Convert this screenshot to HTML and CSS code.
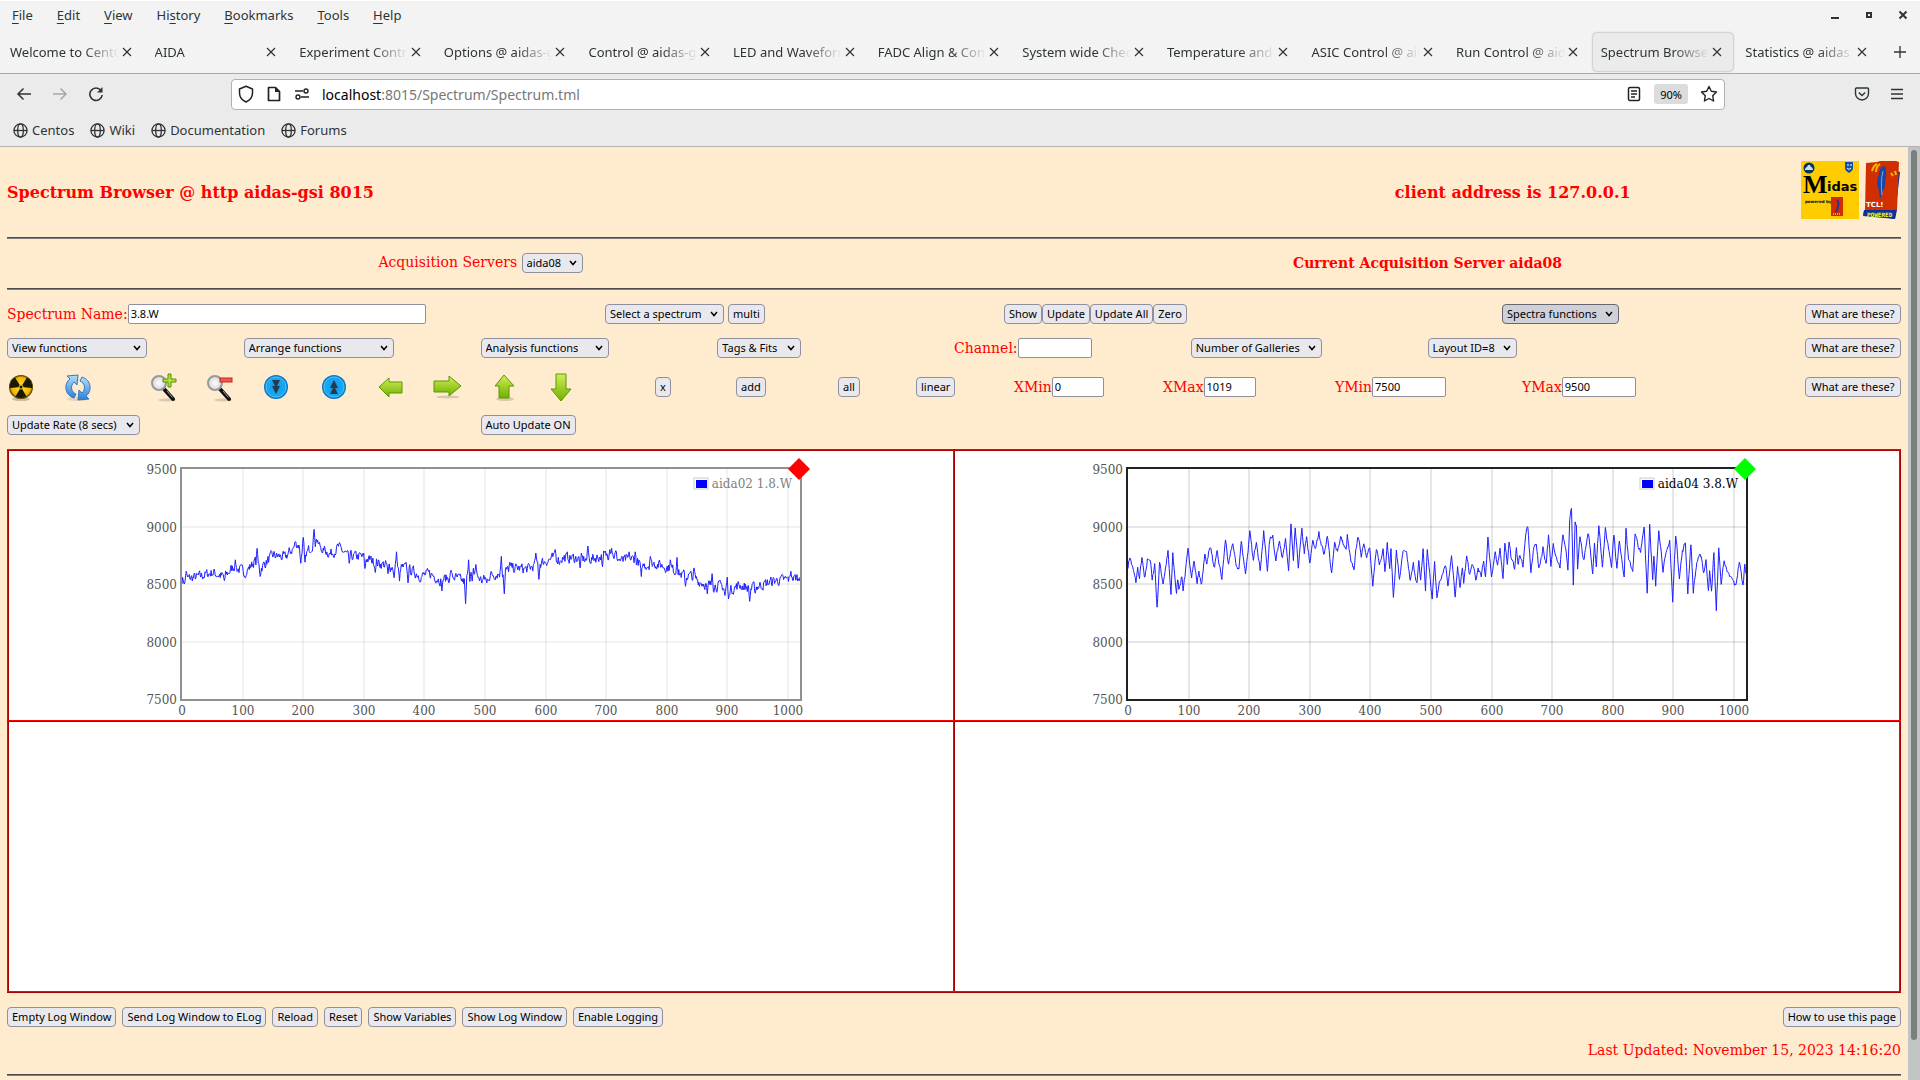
FILE: index.html
```
<!DOCTYPE html>
<html lang="en">
<head>
  <meta charset="UTF-8">
  <meta name="viewport" content="width=device-width, initial-scale=1.0">
  <title>Spectrum Browser @ http aidas-gsi 8015</title>
  <link rel="stylesheet" href="styles.css">
</head>
<body>
  <header class="browser">
    <div class="menubar">
      <nav class="menus">
        <a href="#"><u>F</u>ile</a>
        <a href="#"><u>E</u>dit</a>
        <a href="#"><u>V</u>iew</a>
        <a href="#">Hi<u>s</u>tory</a>
        <a href="#"><u>B</u>ookmarks</a>
        <a href="#"><u>T</u>ools</a>
        <a href="#"><u>H</u>elp</a>
      </nav>
      <div class="window-buttons">
        <button class="plain" aria-label="Minimize"><svg width="10" height="10"><path d="M1 8h8" stroke="#2e3436" stroke-width="2"/></svg></button>
        <button class="plain" aria-label="Maximize"><svg width="10" height="10"><path d="M3 3h4v4h-4z" fill="none" stroke="#2e3436" stroke-width="2"/></svg></button>
        <button class="plain" aria-label="Close"><svg width="10" height="10"><path d="M1.500 1.500l7 7M8.500 1.500l-7 7" stroke="#2e3436" stroke-width="2"/></svg></button>
      </div>
    </div>

    <div class="tabs">
      <div class="tab"><a href="#">Welcome to CentOS</a><button class="plain close" aria-label="Close tab"></button></div>
      <div class="tab"><a href="#">AIDA</a><button class="plain close" aria-label="Close tab"></button></div>
      <div class="tab"><a href="#">Experiment Control</a><button class="plain close" aria-label="Close tab"></button></div>
      <div class="tab"><a href="#">Options @ aidas-gsi</a><button class="plain close" aria-label="Close tab"></button></div>
      <div class="tab"><a href="#">Control @ aidas-gsi</a><button class="plain close" aria-label="Close tab"></button></div>
      <div class="tab"><a href="#">LED and Waveform</a><button class="plain close" aria-label="Close tab"></button></div>
      <div class="tab"><a href="#">FADC Align &amp; Control</a><button class="plain close" aria-label="Close tab"></button></div>
      <div class="tab"><a href="#">System wide Checks</a><button class="plain close" aria-label="Close tab"></button></div>
      <div class="tab"><a href="#">Temperature and</a><button class="plain close" aria-label="Close tab"></button></div>
      <div class="tab"><a href="#">ASIC Control @ aidas</a><button class="plain close" aria-label="Close tab"></button></div>
      <div class="tab"><a href="#">Run Control @ aidas</a><button class="plain close" aria-label="Close tab"></button></div>
      <div class="tab active"><a href="#">Spectrum Browser</a><button class="plain close" aria-label="Close tab"></button></div>
      <div class="tab"><a href="#">Statistics @ aidas</a><button class="plain close" aria-label="Close tab"></button></div>
      <button class="plain new-tab" aria-label="New tab"><svg width="14" height="14"><path d="M7 1v12M1 7h12" stroke="#2e3436" stroke-width="1.300"/></svg></button>
    </div>

    <div class="toolbar">
      <div class="nav-buttons">
        <button class="plain" aria-label="Back"><svg width="16" height="16" fill="none" stroke="#2e3436" stroke-width="1.500"><path d="M15 8H2M7.500 2.500L2 8l5.500 5.500"/></svg></button>
        <button class="plain" aria-label="Forward"><svg width="16" height="16" fill="none" stroke="#a6a8a8" stroke-width="1.500"><path d="M1 8h13M8.500 2.500L14 8l-5.500 5.500"/></svg></button>
        <button class="plain" aria-label="Reload"><svg width="16" height="16" fill="none" stroke="#2e3436" stroke-width="1.600"><path d="M13 4.500A6.200 6.200 0 1 0 14.200 9"/><path d="M14.500 1v5.500H9z" fill="#2e3436" stroke="none"/></svg></button>
      </div>
      <div class="urlbar">
        <svg width="16" height="18" fill="none" stroke="#222" stroke-width="1.500"><path d="M8 1.200L14.500 4v4c0 4-2.500 7-6.500 9-4-2-6.500-5-6.500-9V4z" stroke-linejoin="round"/></svg>
        <svg width="16" height="18" fill="none" stroke="#222" stroke-width="1.700"><path d="M2.500 2.500h7l4 4v9h-11z" stroke-linejoin="round"/><path d="M9 2v5h5z" fill="#222" stroke="none"/></svg>
        <svg width="16" height="18" fill="none" stroke="#222" stroke-width="1.400"><path d="M1 6h8M7 12h8"/><circle cx="12" cy="6" r="2"/><circle cx="4" cy="12" r="2"/></svg>
        <div class="address"><b>localhost</b>:8015/Spectrum/Spectrum.tml</div>
        <svg width="16" height="18" fill="none" stroke="#222" stroke-width="1.500"><rect x="2.500" y="2.500" width="11" height="13" rx="1.500"/><path d="M5 6h6M5 9h6M5 12h4"/></svg>
        <button class="plain zoom">90%</button>
        <svg width="18" height="18" fill="none" stroke="#222" stroke-width="1.400" stroke-linejoin="round"><path d="M9 1.500l2.300 4.800 5.200.7-3.800 3.700.9 5.300L9 13.500 4.400 16l.9-5.300L1.500 7l5.200-.7z"/></svg>
      </div>
      <div class="side-buttons">
        <button class="plain" aria-label="Pocket"><svg width="16" height="16" fill="none" stroke="#2e3436" stroke-width="1.400"><path d="M2.500 2h11a1 1 0 0 1 1 1v4.500a6.500 6.500 0 0 1-13 0V3a1 1 0 0 1 1-1z"/><path d="M4.800 6.500L8 9.500l3.200-3"/></svg></button>
        <button class="plain" aria-label="Menu"><svg width="14" height="14"><path d="M1 2.500h12M1 7h12M1 11.500h12" stroke="#2e3436" stroke-width="1.400"/></svg></button>
      </div>
    </div>

    <svg class="defs" width="0" height="0">
      <symbol id="globe" viewBox="0 0 16 16"><g fill="none" stroke="#2e3436" stroke-width="1.400"><circle cx="8" cy="8" r="7"/><ellipse cx="8" cy="8" rx="3" ry="7"/><path d="M1 8h14"/></g></symbol>
      <linearGradient id="green" x1="0" y1="0" x2="0" y2="1"><stop offset="0" stop-color="#d2ee58"/><stop offset="1" stop-color="#6fb000"/></linearGradient>
      <linearGradient id="blue" x1="0" y1="0" x2="0" y2="1"><stop offset="0" stop-color="#b5dcf8"/><stop offset="1" stop-color="#2c7fd6"/></linearGradient>
      <radialGradient id="disc"><stop offset="0" stop-color="#0a96ee"/><stop offset="0.700" stop-color="#17aaf4"/><stop offset="1" stop-color="#0b6cc0"/></radialGradient>
      <radialGradient id="lens"><stop offset="0" stop-color="#fff"/><stop offset="1" stop-color="#d5d5dc"/></radialGradient>
      <radialGradient id="hazard"><stop offset="0" stop-color="#ffe640"/><stop offset="0.800" stop-color="#f2b200"/><stop offset="1" stop-color="#3c2c00"/></radialGradient>
      <symbol id="magnifier" viewBox="0 0 29 29">
        <ellipse cx="18" cy="27" rx="9" ry="1.500" fill="#000" opacity="0.150"/>
        <path d="M15 16l9 10" stroke="#111" stroke-width="4" stroke-linecap="round"/>
        <path d="M18 18l5.500 6.500" stroke="#999" stroke-width="1"/>
        <circle cx="10" cy="10" r="7" fill="url(#lens)" stroke="#999" stroke-width="2"/>
      </symbol>
    </svg>

    <nav class="bookmarks">
      <a href="#"><svg width="15" height="15"><use href="#globe"/></svg>Centos</a>
      <a href="#"><svg width="15" height="15"><use href="#globe"/></svg>Wiki</a>
      <a href="#"><svg width="15" height="15"><use href="#globe"/></svg>Documentation</a>
      <a href="#"><svg width="15" height="15"><use href="#globe"/></svg>Forums</a>
    </nav>
  </header>

  <div class="viewport">
    <main class="page">
      <div class="title-row">
        <h3>Spectrum Browser @ http aidas-gsi 8015</h3>
        <h3 class="client">client address is 127.0.0.1</h3>
        <div class="logos">
          <svg width="58" height="58" viewBox="0 0 58 58">
            <rect width="58" height="58" fill="#fc0"/>
            <circle cx="8" cy="7" r="5.500" fill="#036"/>
            <path d="M4 9c0-3 2-2 3-5h2c1 3 3 2 3 5z" fill="#cde"/>
            <path d="M44 1h8v6c0 2-2 4-4 5-2-1-4-3-4-5z" fill="#124fa5"/>
            <path d="M46 4h2M49 4h2M46 7q2 3 4 0" stroke="#fff" fill="none"/>
            <text x="2" y="32" class="midas-m">M</text>
            <text x="26" y="30" class="midas-rest">idas</text>
            <text x="4" y="42" class="midas-by">powered by</text>
            <rect x="30" y="36" width="12" height="19" fill="#d22c00"/>
            <path d="M36 39c3 3 1 8-1 12" stroke="#1c3c9c" stroke-width="2" fill="none"/>
            <path d="M32 53h8" stroke="#fff" stroke-dasharray="1 1"/>
          </svg>
          <svg width="38" height="58" viewBox="0 0 38 58">
            <path d="M34 10l3 1-4 36H3L0 53l32 5 2-9z" fill="#0a329b"/>
            <path d="M3 2l11-1 3-1h16l3 1-2 48H2z" fill="#d22f00"/>
            <path d="M1 49l32 1-1 8-32-3z" fill="#0a329b"/>
            <path d="M23 6c-5-3-7 4-7 8-3 5-2 10 0 16 0 4 1 6 1 9l2-8c4-5 3-9 3-12 2-3 1-8 1-13z" fill="#1548a8"/>
            <path d="M20 10c-2 8-2 15-1 24" stroke="#7aa8dc" fill="none"/>
            <path d="M9 10c1-4 3-6 5-7M13 11c0-4 1-6 4-8M28 12l2 3M32 10l1 4" stroke="#f8b800" stroke-width="2" fill="none"/>
            <text x="3" y="46" class="tcl">TCL!</text>
            <text x="4" y="56" class="powered">POWERED</text>
          </svg>
        </div>
      </div>
      <hr>
      <div class="server-row">
        <div><label for="server">Acquisition Servers</label> <select id="server"><option>aida08</option></select></div>
        <div><b>Current Acquisition Server aida08</b></div>
      </div>
      <hr>

      <form class="controls">
        <div class="row name-row">
          <div class="field"><label for="name">Spectrum Name:</label><input type="text" id="name" class="wide" value="3.8.W"></div>
          <div class="field spaced"><select class="w-spectrum" aria-label="Select a spectrum"><option>Select a spectrum</option></select><button type="button">multi</button></div>
          <div class="field"><button type="button">Show</button><button type="button">Update</button><button type="button">Update All</button><button type="button">Zero</button></div>
          <div class="field"><select class="w-spectra pressed" aria-label="Spectra functions"><option>Spectra functions</option></select></div>
          <div class="field last"><button type="button" class="help">What are these?</button></div>
        </div>

        <div class="row function-row">
          <div class="field"><select class="w-view" aria-label="View functions"><option>View functions</option></select></div>
          <div class="field"><select class="w-arrange" aria-label="Arrange functions"><option>Arrange functions</option></select></div>
          <div class="field"><select class="w-analysis" aria-label="Analysis functions"><option>Analysis functions</option></select></div>
          <div class="field"><select class="w-tags" aria-label="Tags and fits"><option>Tags &amp; Fits</option></select></div>
          <div class="field"><label for="channel">Channel:</label><input type="text" id="channel" class="medium"></div>
          <div class="field"><select aria-label="Number of galleries"><option>Number of Galleries</option></select></div>
          <div class="field"><select aria-label="Layout"><option>Layout ID=8</option></select></div>
          <div class="field last"><button type="button" class="help">What are these?</button></div>
        </div>

        <div class="row icon-row">
          <button type="button" class="plain" aria-label="Clear"><svg width="29" height="29"><ellipse cx="14" cy="26" rx="9" ry="2" fill="#000" opacity="0.200"/><circle cx="14" cy="14" r="12" fill="url(#hazard)"/><path d="M14 14L3 15A11 11 0 0 1 8 4.500zM14 14l6-9.500A11 11 0 0 1 25 15zM14 14l5.500 9.500a11 11 0 0 1-11 0z" fill="#1c1808"/><circle cx="14" cy="14" r="2" fill="#1c1808" stroke="#e8c020"/></svg></button>
          <button type="button" class="plain" aria-label="Refresh"><svg width="29" height="29"><ellipse cx="15" cy="26" rx="11" ry="2" fill="#000" opacity="0.100"/><g fill="url(#blue)" stroke="#2e78c4"><path d="M11 25C1 22 1 10 7 6L4 3l11-1-1 10-3-3c-4 4-3 10 2 12z"/><path d="M19 4c10 3 10 15 4 19l3 3-11 1 1-10 3 3c4-4 3-10-2-12z"/></g></svg></button>
          <button type="button" class="plain" aria-label="Zoom in"><svg width="29" height="29"><use href="#magnifier"/><path d="M19 1h3v5h5v3h-5v5h-3V9h-5V6h5z" fill="#b4e030" stroke="#4f9400"/></svg></button>
          <button type="button" class="plain" aria-label="Zoom out"><svg width="29" height="29"><use href="#magnifier"/><rect x="15" y="5" width="12" height="4" fill="#f05a50" stroke="#c02820"/></svg></button>
          <button type="button" class="plain" aria-label="Scale down"><svg width="29" height="29"><circle cx="14" cy="14" r="12" fill="url(#disc)"/><circle cx="14" cy="14" r="10" fill="none" stroke="#54c4fa"/><path d="M10 7h8l-3 6h3l-4 8-4-8h3z" fill="#263a48"/></svg></button>
          <button type="button" class="plain" aria-label="Scale up"><svg width="29" height="29"><circle cx="14" cy="14" r="12" fill="url(#disc)"/><circle cx="14" cy="14" r="10" fill="none" stroke="#54c4fa"/><path d="M14 7l4 8h-3l3 6h-8l3-6h-3z" fill="#263a48"/></svg></button>
          <button type="button" class="plain" aria-label="Left"><svg width="29" height="29"><path d="M2 14L12 5v4h13v11H12v4z" fill="url(#green)" stroke="#5a9800"/></svg></button>
          <button type="button" class="plain" aria-label="Right"><svg width="29" height="29"><ellipse cx="15" cy="24" rx="12" ry="1.500" fill="#000" opacity="0.150"/><path d="M28 13L16 3v5H1v11h15v4z" fill="url(#green)" stroke="#5a9800"/></svg></button>
          <button type="button" class="plain" aria-label="Up"><svg width="29" height="29"><ellipse cx="15" cy="26" rx="9" ry="2" fill="#000" opacity="0.150"/><path d="M14 2l10 11h-5v12H9V13H5z" fill="url(#green)" stroke="#5a9800"/></svg></button>
          <button type="button" class="plain" aria-label="Down"><svg width="29" height="29"><path d="M14 28L4 16h5V1h10v15h5z" fill="url(#green)" stroke="#5a9800"/></svg></button>
          <button type="button">x</button>
          <button type="button">add</button>
          <button type="button">all</button>
          <button type="button">linear</button>
          <div class="field"><label for="xmin">XMin</label><input type="text" id="xmin" value="0"></div>
          <div class="field"><label for="xmax">XMax</label><input type="text" id="xmax" value="1019"></div>
          <div class="field"><label for="ymin">YMin</label><input type="text" id="ymin" class="medium" value="7500"></div>
          <div class="field"><label for="ymax">YMax</label><input type="text" id="ymax" class="medium" value="9500"></div>
          <div class="field last"><button type="button" class="help">What are these?</button></div>
        </div>

        <div class="row update-row">
          <div class="field"><select class="w-rate" aria-label="Update rate"><option>Update Rate (8 secs)</option></select></div>
          <div class="field"><button type="button">Auto Update ON</button></div>
        </div>
      </form>

      <table class="gallery">
        <tr>
          <td><svg id="chart1" class="chart idle" width="680" height="269"></svg></td>
          <td><svg id="chart2" class="chart" width="680" height="269"></svg></td>
        </tr>
        <tr>
          <td></td>
          <td></td>
        </tr>
      </table>

      <div class="footer">
        <div class="log-buttons">
          <button>Empty Log Window</button>
          <button>Send Log Window to ELog</button>
          <button>Reload</button>
          <button>Reset</button>
          <button>Show Variables</button>
          <button>Show Log Window</button>
          <button>Enable Logging</button>
        </div>
        <button>How to use this page</button>
      </div>
      <div class="updated">Last Updated: November 15, 2023 14:16:20</div>
      <hr>
    </main>
    <div class="scrollbar"><div class="thumb"></div></div>
  </div>

  <script src="charts.js"></script>
</body>
</html>
```
FILE: styles.css
```
* {
  box-sizing: border-box;
}

body {
  margin: 0;
  height: 100vh;
  display: flex;
  flex-direction: column;
  overflow: hidden;
  background-color: #ffebcd;
  font-family: "DejaVu Serif", serif;
  font-size: 14px;
  color: red;
}

a {
  color: inherit;
  text-decoration: none;
}

/* browser window */
.browser {
  font-family: "Noto Sans", sans-serif;
  font-size: 13px;
  color: #2e3436;
  background-color: #ebebeb;
  border-bottom: 1px solid #b4b4b4;
}

.defs {
  position: absolute;
}

.menubar {
  display: flex;
  justify-content: space-between;
  align-items: center;
  height: 30px;
  padding: 0 12px 2px;
  background-color: #f3f3f3;
  border-top: 1px solid #fff;
}

.menus {
  display: flex;
  gap: 24px;
}

.menus u {
  text-underline-offset: 3px;
}

.window-buttons {
  display: flex;
  gap: 24px;
}

.tabs {
  display: flex;
  align-items: center;
  height: 44px;
  background-color: #f3f3f3;
  border-bottom: 1px solid #a9a9a9;
}

.tab {
  flex: 1;
  min-width: 0;
  display: flex;
  align-items: center;
  height: 38px;
  margin: 0 2px;
  padding: 0 8px;
  border-radius: 4px;
}

.tab a {
  flex: 1;
  overflow: hidden;
  white-space: nowrap;
  -webkit-mask-image: linear-gradient(to left, transparent, #000 36px);
  mask-image: linear-gradient(to left, transparent, #000 36px);
}

.tab.active {
  background-color: #ebebeb;
  box-shadow: 0 0 2px #77778a;
}

.close {
  width: 16px;
  height: 16px;
  background: url("data:image/svg+xml,%3Csvg xmlns='http://www.w3.org/2000/svg' width='16' height='16'%3E%3Cpath d='M4 4l8 8M12 4l-8 8' stroke='%232e3436' stroke-width='1.200'/%3E%3C/svg%3E") center no-repeat;
}

button.new-tab {
  width: 40px;
  justify-content: center;
}

.toolbar {
  display: flex;
  align-items: center;
  height: 40px;
  padding: 0 16px;
}

.nav-buttons {
  display: flex;
  gap: 20px;
  width: 215px;
}

.urlbar {
  flex: 1;
  display: flex;
  align-items: center;
  gap: 12px;
  height: 31px;
  padding: 0 6px;
  background-color: #fff;
  border: 1px solid #b0b0b0;
  border-radius: 4px;
}

.address {
  flex: 1;
  font-size: 14px;
  color: #777;
}

.address b {
  font-weight: normal;
  color: #000;
}

.side-buttons {
  display: flex;
  justify-content: flex-end;
  gap: 20px;
  width: 179px;
}

.bookmarks {
  display: flex;
  gap: 16px;
  height: 32px;
  padding: 0 13px;
}

.bookmarks a {
  display: flex;
  align-items: center;
  gap: 4px;
}

/* form controls */
button, select, input {
  height: 20px;
  margin: 0;
  font-family: "Noto Sans", sans-serif;
  font-size: 11px;
  color: #000;
  border: 1px solid #8f8f9d;
  border-radius: 4px;
}

button {
  padding: 0 4px 1px;
  background-color: #e9e9ed;
  white-space: nowrap;
}

select {
  appearance: none;
  padding: 0 20px 1px 4px;
  background: #e9e9ed url("data:image/svg+xml,%3Csvg xmlns='http://www.w3.org/2000/svg' width='8' height='6'%3E%3Cpath d='M1 1l3 3.500 3-3.500' fill='none' stroke='%23000' stroke-width='1.500'/%3E%3C/svg%3E") right 5px center no-repeat;
}

select.pressed {
  background-color: #d0d0d7;
  border-color: #676774;
}

input {
  width: 52px;
  padding: 0 2px 1px;
  background-color: #fff;
  border-radius: 2px;
}

input.medium {
  width: 74px;
}

input.wide {
  width: 298px;
}

button.plain {
  display: flex;
  align-items: center;
  padding: 0;
  border: none;
  background-color: transparent;
}

button.plain.zoom {
  padding: 0 6px;
  background-color: #dcdcdc;
  border-radius: 3px;
}

.help { width: 96px; }
.w-spectrum { width: 119px; }
.w-spectra { width: 117px; }
.w-view { width: 140px; }
.w-arrange { width: 150px; }
.w-analysis { width: 128px; }
.w-tags { width: 84px; }
.w-rate { width: 133px; }

/* web page */
.viewport {
  flex: 1;
  min-height: 0;
  display: flex;
}

.page {
  flex: 1;
  padding: 0 7px;
  overflow: hidden;
}

.scrollbar {
  width: 12px;
  padding: 3px;
  background-color: #c1c4c4;
}

.thumb {
  height: 96%;
  border-radius: 3px;
  background-color: #7c7f80;
}

hr {
  height: 2px;
  margin: 0;
  border: none;
  border-top: 1px solid #4c4c4c;
  border-bottom: 1px solid #808080;
}

.title-row {
  display: grid;
  grid-template-columns: 67fr 25fr 8fr;
  align-items: center;
  height: 90px;
}

h3 {
  margin: 0;
  font-size: 16px;
}

.client {
  text-align: center;
}

.logos {
  display: flex;
  justify-content: flex-end;
  gap: 4px;
  padding-bottom: 4px;
}

.midas-m {
  font: bold 26px "Liberation Serif", serif;
}

.midas-rest {
  font: bold 13px "DejaVu Sans", sans-serif;
}

.midas-by {
  font: bold 4px "DejaVu Sans", sans-serif;
}

.tcl {
  font: bold 7px "DejaVu Sans", sans-serif;
  fill: #fff;
}

.powered {
  font: bold 6px "DejaVu Sans Mono", monospace;
  fill: #ff0;
}

.server-row {
  display: grid;
  grid-template-columns: 1fr 1fr;
  align-items: center;
  height: 49px;
  padding-bottom: 2px;
  text-align: center;
}

.controls {
  padding: 7px 0 8px;
}

.row {
  display: grid;
  align-items: center;
  justify-items: start;
  height: 34px;
}

.field {
  display: flex;
  align-items: center;
  white-space: nowrap;
}

.spaced {
  gap: 4px;
}

.last {
  justify-self: end;
}

.name-row {
  grid-template-columns: 598fr 399fr 498fr 199fr 200fr;
}

.function-row {
  grid-template-columns: repeat(8, 1fr);
}

.icon-row {
  grid-template-columns: 56fr 86fr 56fr 57fr 58fr 57fr 56fr 57fr 57fr 108fr 81fr 102fr 78fr 98fr 149fr 172fr 187fr 189fr 190fr;
  height: 44px;
}

.update-row {
  grid-template-columns: 1fr 3fr;
  height: 32px;
}

/* galleries */
.gallery {
  width: 100%;
  table-layout: fixed;
  border-collapse: collapse;
}

.gallery td {
  height: 271px;
  padding: 0;
  border: 2px ridge red;
  background-color: #fff;
}

.chart {
  display: block;
  margin: 0 auto;
  font-size: 12px;
  fill: #545454;
}

.chart .frame {
  fill: none;
  stroke: #222;
  stroke-width: 2;
}

.chart .grid {
  stroke: #545454;
  stroke-opacity: 0.15;
  stroke-width: 2;
}

.chart .trace {
  fill: none;
  stroke: #2020ff;
  stroke-width: 1;
  stroke-linejoin: round;
}

.chart .legend {
  fill: #000;
}

.chart .swatch {
  fill: #00f;
}

.chart .swatch-box {
  fill: #fff;
  stroke: #ccc;
}

.chart .marker {
  fill: #0f0;
}

.chart.idle .frame {
  stroke: #909090;
}

.chart.idle .grid {
  stroke-opacity: 0.08;
}

.chart.idle .legend {
  fill: #808080;
}

.chart.idle .marker {
  fill: #f00;
}

.footer {
  display: flex;
  justify-content: space-between;
  align-items: center;
  height: 48px;
}

.log-buttons {
  display: flex;
  gap: 6px;
}

.updated {
  margin-bottom: 15px;
  line-height: 18px;
  text-align: right;
}
```
FILE: charts.js
```
// channel, counts pairs
const base1 = [0,8540, 25,8560, 50,8600, 70,8560, 85,8650, 105,8600, 120,8700, 130,8640, 150,8750, 170,8730, 190,8850, 205,8760, 218,8870, 235,8800, 245,8760, 258,8820, 275,8740, 295,8740, 320,8690, 345,8650, 370,8640, 395,8570, 410,8590, 425,8540, 450,8560, 465,8520, 480,8600, 495,8530, 510,8580, 530,8600, 545,8640, 570,8630, 590,8680, 610,8720, 640,8730, 670,8710, 690,8740, 710,8760, 725,8700, 745,8720, 760,8660, 780,8680, 805,8640, 825,8580, 840,8570, 855,8520, 870,8490, 890,8480, 905,8450, 920,8490, 940,8460, 955,8490, 980,8530, 1000,8540, 1020,8560];

const peaks1 = [4,8500, 7,8610, 70,8530, 88,8710, 105,8555, 124,8810, 129,8565, 187,8870, 196,8680, 200,8905, 203,8690, 218,8975, 222,8890, 232,8770, 276,8680, 302,8635, 319,8600, 340,8590, 350,8555, 354,8780, 359,8525, 373,8510, 392,8520, 429,8440, 444,8620, 468,8330, 473,8710, 479,8525, 485,8670, 503,8510, 527,8740, 532,8415, 541,8690, 584,8770, 589,8540, 616,8800, 623,8670, 657,8640, 670,8830, 694,8650, 706,8800, 709,8810, 716,8790, 738,8780, 748,8780, 758,8565, 773,8740, 806,8710, 817,8730, 831,8480, 845,8640, 867,8415, 875,8590, 896,8400, 900,8560, 902,8370, 937,8350, 946,8420, 1005,8610, 1018,8530];

const base2 = [0,8655, 3,8740, 9,8610, 13,8515, 16,8635, 19,8547, 23,8733, 27,8553, 28,8542, 32,8707, 34,8727, 37,8712, 40,8522, 44,8680, 48,8287, 52,8686, 58,8510, 66,8776, 71,8400, 74,8762, 80,8409, 82,8545, 84,8466, 89,8570, 91,8452, 99,8785, 105,8582, 109,8698, 114,8510, 117,8617, 121,8478, 127,8750, 130,8690, 133,8776, 137,8823, 142,8632, 147,8762, 155,8547, 161,8886, 166,8658, 173,8863, 178,8669, 183,8629, 187,8872, 194,8594, 201,8941, 207,8698, 212,8886, 218,8623, 224,8947, 230,8629, 234,8886, 239,8927, 244,8698, 250,8898, 255,8720, 260,8872, 265,8620, 269,9014, 273,8683, 276,8979, 281,8652, 287,8964, 291,8776, 295,8898, 300,8663, 305,8895, 309,8790, 315,8944, 324,8750, 329,8935, 336,8576, 341,8849, 346,8797, 351,8909, 360,8785, 362,8918, 368,8675, 373,8634, 379,8921, 385,8756, 389,8863, 394,8756, 399,8808, 404,8461, 410,8820, 415,8669, 421,8820, 424,8623, 428,8846, 432,8640, 434,8790, 438,8380, 443,8785, 448,8542, 454,8779, 460,8756, 466,8522, 471,8670, 477,8501, 480,8683, 483,8533, 487,8797, 491,8449, 494,8802, 502,8365, 506,8712, 510,8365, 514,8530, 518,8582, 524,8675, 528,8501, 534,8736, 540,8385, 544,8629, 548,8490, 552,8623, 554,8513, 559,8733, 564,8582, 569,8678, 574,8524, 578,8640, 583,8560, 587,8689, 590,8570, 594,8900, 600,8570, 606,8780, 610,8646, 614,8785, 619,8562, 622,8869, 626,8683, 629,8872, 633,8707, 638,8643, 641,8814, 644,8658, 647,8762, 652,8660, 657,8960, 660,8979, 665,8608, 670,8814, 674,8863, 678,8623, 685,8814, 690,8683, 694,8918, 698,8640, 702,8851, 708,8727, 713,8652, 718,8933, 723,8790, 726,8600, 729,9040, 732,9158, 735,8472, 738,9020, 740,9015, 742,8620, 746,8927, 752,8698, 760,8941, 767,8603, 770,8866, 773,8657, 777,9014, 783,8669, 788,8970, 798,8669, 802,8941, 807,8629, 811,8883, 819,8570, 822,8988, 826,8704, 833,8620, 837,8927, 846,8760, 852,9014, 857,8426, 861,9025, 866,8524, 868,8727, 871,8478, 876,8988, 883,8629, 894,8886, 899,8339, 904,8941, 910,8570, 915,8779, 920,8863, 924,8429, 929,8854, 933,8437, 939,8692, 946,8753, 950,8600, 954,8698, 958,8461, 960,8610, 963,8420, 967,8782, 971,8258, 975,8808, 979,8501, 984,8721, 989,8588, 997,8540, 1003,8478, 1009,8698, 1015,8478, 1018,8675, 1020,8590];

const plotLeft = 41;
const plotTop = 18;
const plotWidth = 618;
const plotHeight = 230;

function xPos(channel) {
  return plotLeft + channel * plotWidth / 1020;
}

function yPos(counts) {
  return plotTop + (9500 - counts) * plotHeight / 2000;
}

// fill in every channel between the given points, with some jitter
function spectrum(base, peaks, jitter) {
  const data = [];
  let seed = 7;
  let noise = 0;
  for (let i = 0; i + 3 < base.length; i += 2) {
    const x0 = base[i], y0 = base[i + 1], x1 = base[i + 2], y1 = base[i + 3];
    for (let x = x0; x < x1; x++) {
      seed = (seed * 16807) % 2147483647;
      noise = noise * 0.4 + (seed / 2147483647 * 2 - 1) * jitter;
      data[x] = y0 + (y1 - y0) * (x - x0) / (x1 - x0) + noise;
    }
  }
  data.push(base[base.length - 1]);
  for (let i = 0; i < peaks.length; i += 2) {
    const x = peaks[i];
    data[x - 1] = (data[x - 1] + peaks[i + 1]) / 2;
    data[x + 1] = (data[x + 1] + peaks[i + 1]) / 2;
    data[x] = peaks[i + 1];
  }
  return data;
}

function drawChart(id, name, data) {
  let svg = '';
  for (let c = 0; c <= 1000; c += 100) {
    const x = Math.round(xPos(c));
    if (c > 0) {
      svg += `<line class="grid" x1="${x}" y1="18" x2="${x}" y2="248"/>`;
    }
    svg += `<text x="${x}" y="264" text-anchor="middle">${c}</text>`;
  }
  for (let v = 7500; v <= 9500; v += 500) {
    const y = Math.round(yPos(v));
    if (v > 7500 && v < 9500) {
      svg += `<line class="grid" x1="41" y1="${y}" x2="659" y2="${y}"/>`;
    }
    svg += `<text x="36" y="${y + 5}" text-anchor="end">${v}</text>`;
  }
  const points = data.map((v, c) => xPos(c).toFixed(1) + ',' + yPos(v).toFixed(1)).join(' ');
  svg += `<polyline class="trace" points="${points}"/>`;
  svg += '<rect class="frame" x="40" y="17" width="620" height="232"/>';
  svg += '<rect class="swatch-box" x="553" y="27" width="14" height="11"/>';
  svg += '<rect class="swatch" x="555" y="29" width="11" height="8"/>';
  svg += `<text class="legend" x="651" y="37" text-anchor="end">${name}</text>`;
  svg += '<path class="marker" d="M658 7l11 11-11 11-11-11z"/>';
  document.getElementById(id).innerHTML = svg;
}

drawChart('chart1', 'aida02 1.8.W', spectrum(base1, peaks1, 40));
drawChart('chart2', 'aida04 3.8.W', spectrum(base2, [], 20));
```
